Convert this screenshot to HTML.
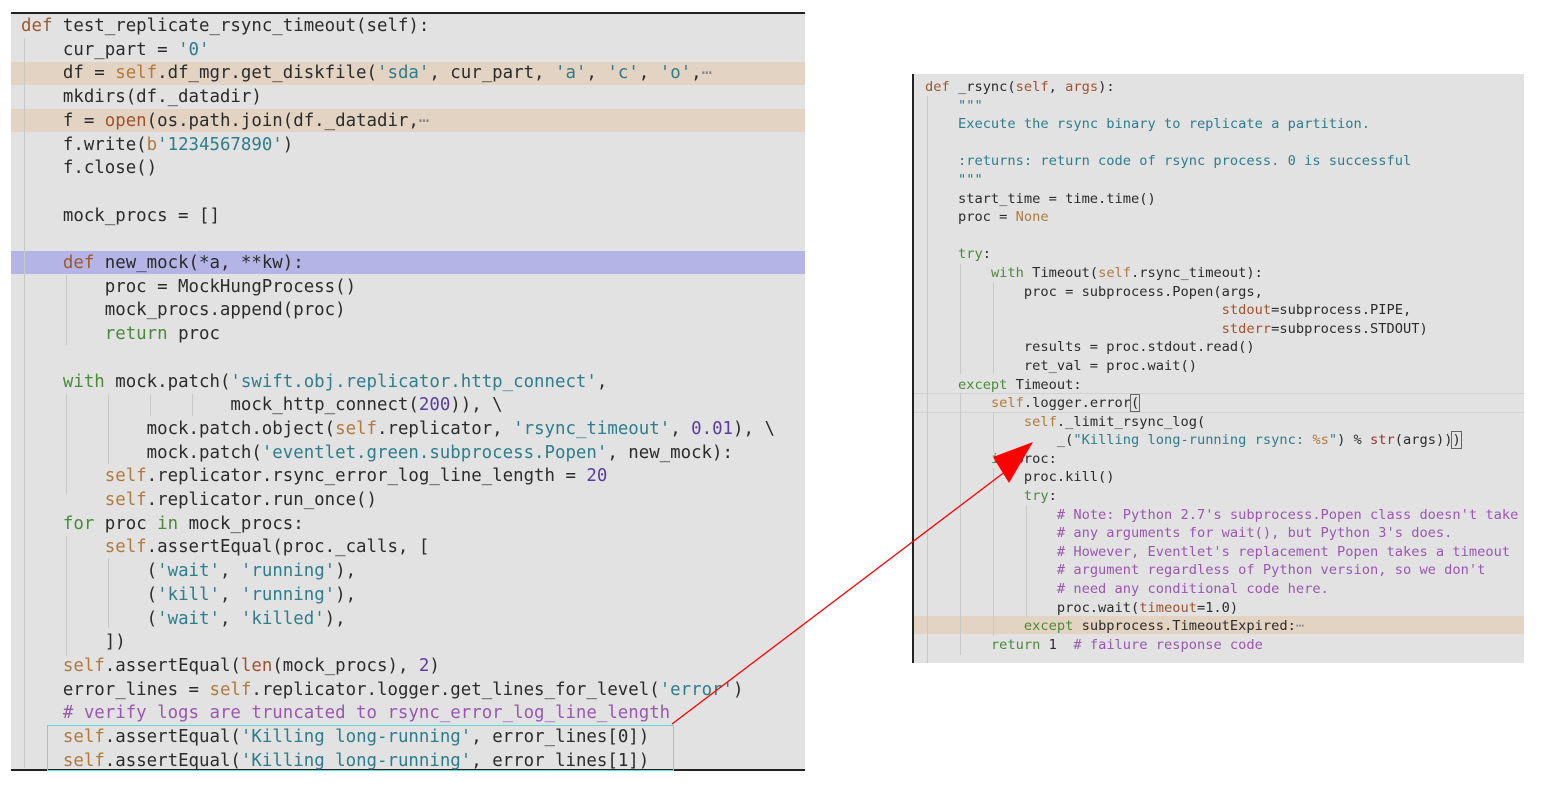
<!DOCTYPE html>
<html><head><meta charset="utf-8"><style>
body{margin:0;width:1541px;height:792px;background:#fff;position:relative;overflow:hidden}
.p{position:absolute;background:#e2e2e2}
.L{font-family:"DejaVu Sans Mono","Liberation Mono",monospace;font-size:17.4px;color:#2b2b2b;white-space:pre;position:absolute;left:21px;line-height:23.7px}
.R{font-family:"DejaVu Sans Mono","Liberation Mono",monospace;font-size:13.7px;color:#2b2b2b;white-space:pre;position:absolute;left:925px;line-height:18.6px}
.k{color:#9b5a2e}.s{color:#b07a3c}.t{color:#2e7d8c}.c{color:#9957b0}.g{color:#4a8a3a}.n{color:#5a3f9a}.b{color:#a0522d}
.hl{position:absolute;background:#e3d3c3}
.gd{position:absolute;width:1px;background:#c8c8c8}
</style></head><body>
<div class="p" style="left:11px;top:13px;width:794px;height:757px"></div>
<div style="position:absolute;left:11px;top:12px;width:794px;height:2px;background:#222"></div>
<div style="position:absolute;left:11px;top:769px;width:794px;height:2px;background:#222"></div>
<div class="hl" style="left:11px;top:62px;width:794px;height:23px"></div>
<div class="hl" style="left:11px;top:109px;width:794px;height:23px"></div>
<div style="position:absolute;left:11px;top:251px;width:794px;height:23px;background:#b4b4e6"></div>
<div class="gd" style="left:24px;top:38px;height:730px"></div>
<div class="gd" style="left:66px;top:275px;height:70px"></div>
<div class="gd" style="left:66px;top:394px;height:100px"></div>
<div class="gd" style="left:108px;top:394px;height:70px"></div>
<div class="gd" style="left:150px;top:394px;height:22px"></div>
<div class="gd" style="left:192px;top:394px;height:22px"></div>
<div class="gd" style="left:66px;top:536px;height:120px"></div>
<div class="gd" style="left:108px;top:558px;height:70px"></div>

<div class="L" style="top:15px"><span class="k">def</span> test_replicate_rsync_timeout(self):
    cur_part = <span class="t">'0'</span>
    df = <span class="s">self</span>.df_mgr.get_diskfile(<span class="t">'sda'</span>, cur_part, <span class="t">'a'</span>, <span class="t">'c'</span>, <span class="t">'o'</span>,<span style="color:#888">⋯</span>
    mkdirs(df._datadir)
    f = <span class="b">open</span>(os.path.join(df._datadir,<span style="color:#888">⋯</span>
    f.write(<span class="s">b</span><span class="t">'1234567890'</span>)
    f.close()

    mock_procs = []

    <span class="k">def</span> new_mock(*a, **kw):
        proc = MockHungProcess()
        mock_procs.append(proc)
        <span class="g">return</span> proc

    <span class="g">with</span> mock.patch(<span class="t">'swift.obj.replicator.http_connect'</span>,
                    mock_http_connect(<span class="n">200</span>)), \
            mock.patch.object(<span class="s">self</span>.replicator, <span class="t">'rsync_timeout'</span>, <span class="n">0.01</span>), \
            mock.patch(<span class="t">'eventlet.green.subprocess.Popen'</span>, new_mock):
        <span class="s">self</span>.replicator.rsync_error_log_line_length = <span class="n">20</span>
        <span class="s">self</span>.replicator.run_once()
    <span class="g">for</span> proc <span class="g">in</span> mock_procs:
        <span class="s">self</span>.assertEqual(proc._calls, [
            (<span class="t">'wait'</span>, <span class="t">'running'</span>),
            (<span class="t">'kill'</span>, <span class="t">'running'</span>),
            (<span class="t">'wait'</span>, <span class="t">'killed'</span>),
        ])
    <span class="s">self</span>.assertEqual(<span class="b">len</span>(mock_procs), <span class="n">2</span>)
    error_lines = <span class="s">self</span>.replicator.logger.get_lines_for_level(<span class="t">'error'</span>)
    <span class="c"># verify logs are truncated to rsync_error_log_line_length</span>
    <span class="s">self</span>.assertEqual(<span class="t">'Killing long-running'</span>, error_lines[0])
    <span class="s">self</span>.assertEqual(<span class="t">'Killing long-running'</span>, error_lines[1])</div>
<div style="position:absolute;left:47px;top:725px;width:625px;height:44px;border:1px solid #5fdcdc"></div>

<div class="p" style="left:913px;top:74px;width:611px;height:589px"></div>
<div style="position:absolute;left:912px;top:74px;width:2px;height:589px;background:#222"></div>
<div class="hl" style="left:914px;top:616px;width:610px;height:18px"></div>
<div style="position:absolute;left:914px;top:393px;width:610px;height:1px;background:#d2d2d2"></div>
<div style="position:absolute;left:914px;top:412px;width:610px;height:1px;background:#d2d2d2"></div>
<div class="gd" style="left:927px;top:96px;height:567px"></div>
<div class="gd" style="left:960px;top:264px;height:110px"></div>
<div class="gd" style="left:993px;top:282px;height:92px"></div>
<div class="gd" style="left:960px;top:393px;height:262px"></div>
<div class="gd" style="left:993px;top:412px;height:40px"></div>
<div class="gd" style="left:993px;top:468px;height:168px"></div>
<div class="gd" style="left:1026px;top:505px;height:112px"></div>
<div class="R" style="top:78px"><span class="k">def</span> _rsync(<span class="b">self</span>, <span class="b">args</span>):
    <span class="t">"""</span>
    <span class="t">Execute the rsync binary to replicate a partition.</span>

    <span class="t">:returns: return code of rsync process. 0 is successful</span>
    <span class="t">"""</span>
    start_time = time.time()
    proc = <span class="s">None</span>

    <span class="g">try</span>:
        <span class="g">with</span> Timeout(<span class="s">self</span>.rsync_timeout):
            proc = subprocess.Popen(args,
                                    <span class="b">stdout</span>=subprocess.PIPE,
                                    <span class="b">stderr</span>=subprocess.STDOUT)
            results = proc.stdout.read()
            ret_val = proc.wait()
    <span class="g">except</span> Timeout:
        <span class="s">self</span>.logger.error<span style="outline:1px solid #666">(</span>
            <span class="s">self</span>._limit_rsync_log(
                _(<span class="t">"Killing long-running rsync: </span><span class="s">%s</span><span class="t">"</span>) % <span style="color:#a03030">str</span>(args))<span style="outline:1px solid #666">)</span>
        <span class="g">if</span> proc:
            proc.kill()
            <span class="g">try</span>:
                <span class="c"># Note: Python 2.7's subprocess.Popen class doesn't take</span>
                <span class="c"># any arguments for wait(), but Python 3's does.</span>
                <span class="c"># However, Eventlet's replacement Popen takes a timeout</span>
                <span class="c"># argument regardless of Python version, so we don't</span>
                <span class="c"># need any conditional code here.</span>
                proc.wait(<span class="b">timeout</span>=1.0)
            <span class="g">except</span> subprocess.TimeoutExpired:<span style="color:#888">⋯</span>
        <span class="g">return</span> 1  <span class="c"># failure response code</span></div>

<svg style="position:absolute;left:0;top:0" width="1541" height="792">
<line x1="672" y1="724" x2="1010" y2="468" stroke="#ff0000" stroke-width="1.3"/>
<polygon points="993,457 1033,442 1009,483" fill="#ff0000"/>
</svg>
</body></html>
